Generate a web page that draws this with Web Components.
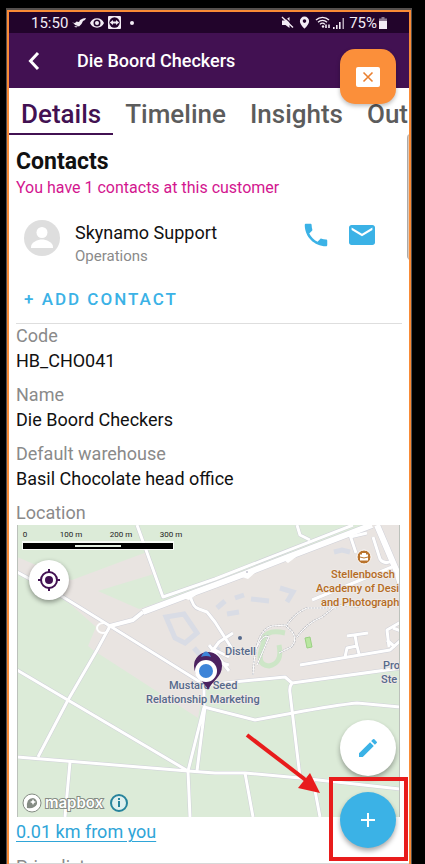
<!DOCTYPE html>
<html lang="en">
<head>
<meta charset="utf-8">
<meta name="viewport" content="width=device-width, initial-scale=1">
<title>Die Boord Checkers</title>
<style>
  body {
    margin: 0;
    height: 100vh;
    overflow: hidden;
    background: #000;
    font-family: Roboto, "Liberation Sans", sans-serif;
    --purple: #421152;
    --purple-dark: #22042b;
    --blue: #3bb2e6;
    --orange: #f98b36;
    --grey: #8a8a8a;
  }
</style>
</head>
<body>
<phone-frame>
  <status-bar slot="bars" time="15:50" battery="75%"></status-bar>
  <app-header slot="bars">Die Boord Checkers</app-header>
  <tab-bar slot="bars" tabs="Details,Timeline,Insights,Out"></tab-bar>

  <contact-section heading="Contacts" note="You have 1 contacts at this customer">
    <contact-row name="Skynamo Support" role="Operations"></contact-row>
  </contact-section>
  <detail-field label="Code">HB_CHO041</detail-field>
  <detail-field label="Name">Die Boord Checkers</detail-field>
  <detail-field label="Default warehouse">Basil Chocolate head office</detail-field>
  <detail-field label="Location">
    <map-view slot="wide"></map-view>
    <text-link slot="wide" href="#directions">0.01 km from you</text-link>
  </detail-field>
  <detail-field label="Price list"></detail-field>

  <bubble-button slot="overlay"></bubble-button>
  <fab-stack slot="overlay"></fab-stack>
  <callout-mark slot="overlay"></callout-mark>
</phone-frame>

<script>
// Registers an element whose shadow root is filled from render(host).
const define = (name, render) => {
  customElements.define(name, class extends HTMLElement {
    connectedCallback() {
      if (this.shadowRoot) return;
      this.attachShadow({ mode: "open" }).innerHTML = render(this);
    }
  });
};

define("phone-frame", () => `
  <style>
    :host {
      display: flex;
      box-sizing: border-box;
      height: 100vh;
      padding: 8px 13px 0 6px;
    }
    .edge {
      flex: 1;
      min-width: 0;
      display: flex;
      border: solid #55504e;
      border-width: 2px 1px 0;
    }
    .screen {
      flex: 1;
      min-width: 0;
      position: relative;
      display: flex;
      flex-direction: column;
      overflow: hidden;
      background: #fff;
      border: 2px solid var(--orange);
      border-bottom: 0;
    }
    main {
      flex: 1;
      min-height: 0;
      overflow: hidden;
      padding: 13px 7px 0;
      border-bottom: 1px solid #d8d8d8;
    }
    .thumb {
      position: absolute;
      top: 122px;
      right: -2px;
      width: 3px;
      height: 126px;
      background: #ddc8b8;
      border-left: 1px solid #aaa;
      border-radius: 4px 0 0 4px;
    }
  </style>
  <div class="edge">
    <div class="screen">
      <slot name="bars"></slot>
      <main><slot></slot></main>
      <div class="thumb"></div>
      <slot name="overlay"></slot>
    </div>
  </div>`);

define("status-bar", host => `
  <style>
    :host {
      display: flex;
      align-items: center;
      gap: 4px;
      height: 21px;
      padding: 0 22px;
      background: var(--purple-dark);
      color: #f3ecf5;
      font-size: 15px;
      line-height: 20px;
    }
    svg { display: block; fill: currentColor; }
    .push { margin-left: auto; }
    .dot { margin-left: 4px; }
    .tight { display: flex; align-items: center; gap: 2px; }
  </style>
  <span>${host.getAttribute("time")}</span>
  <svg width="14" height="12" viewBox="0 0 14 12"><path d="M0 5.500l3 .5 1.500-1.500L7 5l1-2 3-1.500L14 1l-1 2-2 1-1.500 3L7 9.500 4.500 8.500 3 8l-1-1.500z"/><path d="M2 9l4 .5-2 1z"/></svg>
  <svg width="14" height="12" viewBox="0 0 14 12"><path fill-rule="evenodd" d="M7 1.300C3.800 1.300 1.300 3.200 0 6c1.300 2.800 3.800 4.700 7 4.700S12.700 8.800 14 6C12.700 3.200 10.200 1.300 7 1.300zM7 9.500a3.500 3.500 0 110-7 3.500 3.500 0 010 7z"/><circle cx="7" cy="6" r="2"/></svg>
  <svg width="13" height="13" viewBox="0 0 13 13"><rect width="13" height="13" rx="1"/><circle cx="6.500" cy="6.500" r="5.200" fill="#22042b"/><path d="M1.800 6.500L5 4v1.600h3V4l3.200 2.500L8 9V7.400H5V9z"/></svg>
  <svg class="dot" width="6" height="6" viewBox="0 0 6 6"><circle cx="3" cy="3" r="2"/></svg>
  <svg class="push" width="13" height="13" viewBox="0 0 13 13"><path d="M1 4.500h2.500L8.500 1v11L4.500 9H1z"/><path d="M1 1l11 10.500" fill="none" stroke="currentColor" stroke-width="1.400"/><path d="M2.500 0l10.500 10" fill="none" stroke="#22042b" stroke-width="1.200"/></svg>
  <svg width="13" height="13" viewBox="0 0 13 13"><path fill-rule="evenodd" d="M6.500 .5A4.600 4.600 0 001.900 5.200C1.900 8.600 6.500 12.500 6.500 12.500s4.600-3.900 4.600-7.300A4.600 4.600 0 006.500 .5zm0 6.400a1.800 1.800 0 110-3.600 1.800 1.800 0 010 3.600z"/></svg>
  <span class="tight">
    <svg width="16" height="13" viewBox="0 0 16 13"><g fill="none" stroke="currentColor" stroke-width="1.300"><path d="M1 4c3.500-3.600 9.500-3.600 13 0M3 6.200c2.500-2.500 6.500-2.500 9 0M5 8.400c1.500-1.500 3.500-1.500 5 0"/></g><circle cx="8" cy="10.500" r="1.200"/><path d="M11 12V8.500M14 8.500V12" fill="none" stroke="currentColor" stroke-width="1.600"/></svg>
    <svg width="12" height="12" viewBox="0 0 12 12"><path d="M0 10h1.600v2H0zM3 8h1.600v4H3zM6 5h1.600v7H6z"/><path d="M9.500 1h1.500v11H9.500z" opacity=".7"/></svg>
  </span>
  <span class="tight">
    <span>${host.getAttribute("battery")}</span>
    <svg width="8" height="12" viewBox="0 0 8 12"><path d="M2.500 0h3v1.500H8V12H0V1.500h2.500z" opacity=".5"/><path d="M0 4h8v8H0z"/></svg>
  </span>`);

define("app-header", () => `
  <style>
    :host {
      display: flex;
      align-items: center;
      height: 55px;
      padding: 0 11px;
      background: var(--purple);
      color: #fff;
    }
    button {
      width: 28px;
      height: 28px;
      padding: 0;
      margin-right: 29px;
      border: 0;
      background: none;
      color: inherit;
    }
    svg { display: block; margin: auto; }
    h1 {
      margin: 0;
      font-size: 18px;
      font-weight: 500;
      line-height: 24px;
    }
  </style>
  <button type="button" aria-label="Back">
    <svg width="14" height="20" viewBox="0 0 14 20" fill="none" stroke="currentColor" stroke-width="3"><path d="M11 2L3.500 10l7.500 8"/></svg>
  </button>
  <h1><slot></slot></h1>`);

define("tab-bar", host => `
  <style>
    :host {
      display: flex;
      overflow: hidden;
      height: 47px;
      margin-right: 1px;
    }
    button {
      flex: none;
      padding: 6px 12px 0;
      border: 0;
      border-bottom: 2px solid transparent;
      background: none;
      color: #5c5c5c;
      font: 500 26px/32px Roboto, "Liberation Sans", sans-serif;
    }
    button:first-child { padding: 6px 14px 0 8px; }
    button[aria-selected=true] {
      color: var(--purple);
      border-color: var(--purple);
    }
  </style>
  ${host.getAttribute("tabs").split(",").map((tab, i) =>
    `<button type="button" role="tab" aria-selected="${i === 0}">${tab}</button>`).join("")}`);

define("contact-section", host => `
  <style>
    :host { display: block; border-bottom: 1px solid #dedede; }
    h2 {
      margin: 0;
      color: #111;
      font-size: 23px;
      font-weight: 700;
      line-height: 28px;
    }
    p {
      margin: 0 0 20px;
      color: #d3168f;
      font-size: 16px;
      line-height: 24px;
    }
    button {
      display: block;
      height: 32px;
      margin: 15px 0 8px;
      padding: 0 8px;
      border: 0;
      background: none;
      color: var(--blue);
      font: 500 17px/32px Roboto, "Liberation Sans", sans-serif;
      letter-spacing: 2px;
    }
  </style>
  <h2>${host.getAttribute("heading")}</h2>
  <p>${host.getAttribute("note")}</p>
  <slot></slot>
  <button type="button">+ ADD CONTACT</button>`);

define("contact-row", host => `
  <style>
    :host {
      display: flex;
      align-items: flex-start;
      height: 48px;
      padding: 0 27px 0 8px;
    }
    svg { display: block; }
    .who { flex: 1; margin-left: 15px; }
    .name { color: #111; font-size: 18px; line-height: 25px; }
    .role { color: var(--grey); font-size: 15px; line-height: 22px; }
    .actions { display: flex; gap: 18px; }
    a { display: block; color: var(--blue); }
  </style>
  <svg width="36" height="36" viewBox="0 0 36 36">
    <circle cx="18" cy="18" r="18" fill="#dedede"/>
    <circle cx="18" cy="12.500" r="5.500" fill="#fff"/>
    <path d="M7 28v-1c0-5 7-7.500 11-7.500S29 22 29 27v1z" fill="#fff"/>
  </svg>
  <div class="who">
    <div class="name">${host.getAttribute("name")}</div>
    <div class="role">${host.getAttribute("role")}</div>
  </div>
  <div class="actions">
    <a href="#call" aria-label="Call"><svg width="30" height="30" viewBox="0 0 24 24" fill="currentColor"><path d="M6.620 10.790c1.440 2.830 3.760 5.140 6.590 6.590l2.200-2.200c.270-.270.670-.360 1.020-.240 1.120.370 2.330.570 3.570.570.550 0 1 .450 1 1V20c0 .550-.450 1-1 1-9.390 0-17-7.610-17-17 0-.550.450-1 1-1h3.500c.550 0 1 .450 1 1 0 1.250.200 2.450.570 3.570.110.350.030.740-.250 1.020l-2.200 2.200z"/></svg></a>
    <a href="#mail" aria-label="Email"><svg width="26" height="30" viewBox="2 0 20 24" preserveAspectRatio="none" fill="currentColor"><path d="M20 4H4c-1.100 0-2 .900-2 2v12c0 1.100.900 2 2 2h16c1.100 0 2-.900 2-2V6c0-1.100-.900-2-2-2zm0 4l-8 5-8-5V6l8 5 8-5v2z"/></svg></a>
  </div>`);

define("detail-field", host => `
  <style>
    :host { display: block; margin-bottom: 10px; }
    .label { color: var(--grey); font-size: 18px; line-height: 24px; }
    .value { color: #111; font-size: 18px; line-height: 25px; }
  </style>
  <div class="label">${host.getAttribute("label")}</div>
  ${host.querySelector("[slot=wide]") ? "" : `<div class="value"><slot></slot></div>`}
  <slot name="wide"></slot>`);

define("text-link", host => `
  <style>
    :host { display: block; padding: 3px 0 1px; }
    a {
      color: #2fa5d8;
      font-size: 18px;
      line-height: 24px;
      text-underline-offset: 3px;
      text-decoration-thickness: 1px;
    }
  </style>
  <a href="${host.getAttribute("href")}"><slot></slot></a>`);

const ROADS = {
  minor: [
    "M120 0L146 72L198 54L336 0",
    "M0 47L46 72L93 101L183 157",
    "M93 101L80 125L51 175L21 232",
    "M0 145L171 246",
    "M0 232L171 246L198 248L228 248L283 253L384 264",
    "M53 237L48 292M171 246L173 292M228 248L236 292M296 255L303 292",
    "M187 160L187 182L171 246M188 182L180 246",
    "M187 182L238 195L276 188Q320 180 340 178L384 182",
    "M187 160L268 152L275 158L384 143",
    "M275 158Q272 162 273 168L283 252",
    "M173 70Q176 83 182 84L190 87L198 97L217 127",
    "M280 0L283 10L293 15",
    "M295 75L375 42M333 10L339 28M333 12L350 8M356 12L363 34Q367 40 375 36",
    "M283 140L373 125L384 115M328 132L330 123L340 121L342 129M330 111L351 108M338 110L340 122",
    "M384 97L370 105L372 122M376 103L384 106M370 115L378 122",
    "M187 137L202 117L216 108M198 125L212 132M191 134L212 140M192 120L212 146",
  ],
  major: [
    "M126 87L171 70L198 60L230 48L271 32L355 0",
    "M360 0L380 47L384 60",
  ],
  paths: [
    "M236 150Q238 105 255 101L270 100Q278 88 290 83L320 83",
    "M269 101Q284 112 274 122L262 128",
    "M280 112Q290 98 305 92L320 80L345 82",
    "M240 122Q246 108 252 112L240 140",
  ],
};

const road = (list, width) => list.map(d => `<path d="${d}" stroke-width="${width}"/>`).join("");

define("map-view", () => `
  <style>
    :host {
      position: relative;
      display: block;
      height: 292px;
      margin: 0 2px 0 1px;
      background: #dcebd8;
    }
    svg { display: block; }
    .map { width: 100%; height: 100%; }
    text { font-family: Roboto, "Liberation Sans", sans-serif; }
    .place { font-size: 11px; font-weight: 500; fill: #566a8c; stroke: #eee9e6; stroke-width: 2px; paint-order: stroke; }
    .school { fill: #b56c24; }
    .scale { font-size: 8px; font-weight: 400; fill: #222; text-anchor: middle; }
    .brand { font-family: Inter, sans-serif; font-size: 15px; font-weight: 600; fill: #fff; stroke: #858c84; stroke-width: 2px; paint-order: stroke; }
    button {
      position: absolute;
      top: 35px;
      left: 12px;
      width: 40px;
      height: 40px;
      padding: 0;
      border: 0;
      border-radius: 50%;
      background: #fff;
      box-shadow: 0 2px 5px #0006;
      color: var(--purple);
    }
    button svg { margin: auto; }
  </style>
  <svg class="map" viewBox="0 0 384 292" preserveAspectRatio="xMinYMin slice" role="img" aria-label="Map">
    <path fill="#e9e4e1" d="M0 32L55 55L130 27L140 48L81 66L122 84L146 76L350 0H384V143L275 158L268 152L187 160L181 193L76 125L71 121L79 102L52 78L0 47z"/>
    <g fill="none" stroke="#d9dce5" stroke-width="5">
      <path d="M149 92L167 89L180 108L168 118L158 113z"/>
      <path d="M177 123L183 130L194 132L202 122"/>
      <path d="M200 83l8-7M218 73l9-3M234 74l18 2M263 63l13 4-6 10M317 27l8-2 8 2M210 89l12-2"/>
    </g>
    <g fill="none" stroke="#cde6c7" stroke-width="5">
      <path d="M268 108Q245 103 246 120Q238 140 252 141Q266 138 262 120"/>
    </g>
    <path d="M288 113l5-1 2 10-5 1z" fill="#b9e6a0" stroke="#9bd184"/>
    <g fill="none" stroke="#cfd0d8" stroke-linejoin="round">${road(ROADS.minor, 4)}${road(ROADS.major, 7)}
      <path d="M93 101L116 95L126 87" stroke-width="5"/>
    </g>
    <g fill="none" stroke="#b9bac0" stroke-dasharray="2 1">${road(ROADS.paths, 2)}</g>
    <g fill="none" stroke="#fff" stroke-linejoin="round">${road(ROADS.paths, 1)}${road(ROADS.minor, 3)}${road(ROADS.major, 6)}
      <path d="M93 101L116 95L126 87" stroke-width="4"/>
      <ellipse cx="86" cy="103" rx="6" ry="5" stroke-width="2"/>
    </g>
    <path d="M164 72l8-5 7 3-7 5zM222 51l8-6 10 1-9 8zM264 33l9-4 6 3-8 6z" fill="#fff"/>
    <circle cx="230" cy="47" r="1" fill="#c5c5d0"/>

    <circle cx="347" cy="32" r="7" fill="#b9732c" stroke="#fff"/>
    <path d="M343 29.500h2v-1.500h4v1.500h2v6h-8z" fill="#fff"/>
    <path d="M343 32l4 1 4-1" fill="none" stroke="#b9732c"/>
    <g>
      <text class="place school" x="314" y="53">Stellenbosch</text>
      <text class="place school" x="299" y="67">Academy of Desi</text>
      <text class="place school" x="304" y="81">and Photograph</text>
    </g>
    <circle cx="223" cy="113" r="2" fill="#566a8c"/>
    <text class="place" x="208" y="130">Distell</text>
    <text class="place" x="152" y="164">Mustard Seed</text>
    <text class="place" x="129" y="178">Relationship Marketing</text>
    <text class="place" x="366" y="144">Pro</text>
    <text class="place" x="364" y="158">Ste</text>

    <path d="M191 165C187 156 177 152 177 141a14 14 0 0128 0C205 152 195 156 191 165z" fill="#4c2260"/>
    <circle cx="189" cy="146" r="11" fill="#fff"/>
    <circle cx="189" cy="146" r="7" fill="#3d84d8"/>
    <path d="M184 132q5-11 10 0-5-2-10 0z" fill="#3d84d8"/>

    <rect x="5" y="16" width="152" height="9" fill="#fff" opacity=".8"/>
    <rect x="6" y="18" width="150" height="6"/>
    <rect x="58" y="20" width="46" height="2" fill="#e6efe4"/>
    <text class="scale" x="8" y="12">0</text>
    <text class="scale" x="54" y="12">100 m</text>
    <text class="scale" x="104" y="12">200 m</text>
    <text class="scale" x="154" y="12">300 m</text>

    <circle cx="15" cy="278" r="9" fill="#fff" stroke="#858c84"/>
    <path d="M10 283q-1-10 6-10a5 5 0 014 6q-2 5-10 4z" fill="#858c84"/>
    <path d="M16 274l1 2 2 1-2 1-1 2-1-2-2-1 2-1z" fill="#fff"/>
    <text class="brand" x="28" y="283">mapbox</text>
    <circle cx="102" cy="278" r="8" fill="#dff0ee" stroke="#27839c" stroke-width="2"/>
    <path d="M102 276v6m0-9v2" stroke="#27839c" stroke-width="2"/>
    <path d="M0 0v292M383 0v292" stroke="#bcc1bb" stroke-width="2"/>
  </svg>
  <button type="button" aria-label="My location">
    <svg width="22" height="22" viewBox="0 0 22 22"><circle cx="11" cy="11" r="4" fill="currentColor"/><g fill="none" stroke="currentColor" stroke-width="2"><circle cx="11" cy="11" r="8"/><path d="M11 0v4M11 18v4M0 11h4M18 11h4"/></g></svg>
  </button>`);

// Floating chat-head button that sits over the header.
define("bubble-button", () => `
  <style>
    :host { position: absolute; top: 37px; right: 13px; }
    button {
      display: grid;
      place-items: center;
      width: 56px;
      height: 55px;
      padding: 0;
      border: 0;
      border-radius: 15px;
      background: #fb8f3a;
      box-shadow: 0 2px 4px #0004;
    }
  </style>
  <button type="button" aria-label="Close">
    <svg width="24" height="20" viewBox="0 0 24 20"><rect width="24" height="20" rx="2" fill="#fff"/><path d="M7.500 5.500l9 9M16.500 5.500l-9 9" stroke="#ea8030" stroke-width="1.600"/></svg>
  </button>`);

define("fab-stack", () => `
  <style>
    :host {
      position: absolute;
      right: 13px;
      bottom: 16px;
      display: flex;
      flex-direction: column;
      gap: 16px;
    }
    button {
      display: grid;
      place-items: center;
      width: 56px;
      height: 56px;
      padding: 0;
      border: 0;
      border-radius: 50%;
      background: #fff;
      box-shadow: 0 3px 5px #0005;
      color: var(--blue);
    }
    .add { background: var(--blue); color: #fff; }
  </style>
  <button type="button" aria-label="Edit">
    <svg width="24" height="24" viewBox="0 0 24 24" fill="currentColor"><path d="M3 17.250V21h3.750L17.810 9.940l-3.750-3.750L3 17.250zM20.710 7.040a1 1 0 000-1.410l-2.340-2.340a1 1 0 00-1.410 0l-1.830 1.830 3.750 3.750 1.830-1.830z"/></svg>
  </button>
  <button class="add" type="button" aria-label="Add">
    <svg width="14" height="14" viewBox="0 0 14 14"><path d="M7 0v14M0 7h14" stroke="currentColor" stroke-width="2"/></svg>
  </button>`);

// Red arrow and box that point at the add button.
define("callout-mark", () => `
  <style>
    :host {
      position: absolute;
      right: 1px;
      bottom: 3px;
      pointer-events: none;
    }
    svg { display: block; }
  </style>
  <svg width="164" height="130" viewBox="0 0 164 130" fill="none" stroke="#e81c1c">
    <path d="M3 4L63 50" stroke-width="4"/>
    <path d="M76 62L54 57L66 42z" fill="#e81c1c" stroke="none"/>
    <rect x="87" y="48" width="75" height="80" stroke-width="4"/>
  </svg>`);
</script>
</body>
</html>
